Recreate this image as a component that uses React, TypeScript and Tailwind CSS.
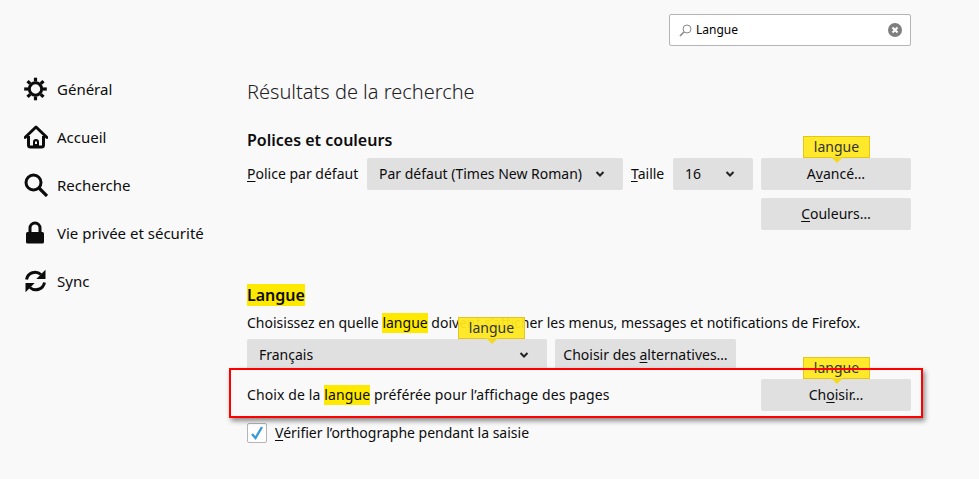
import React from "react";

const Mark = ({ children }: { children: React.ReactNode }) => (
  <span className="inline-block h-5 bg-[#ffe900]">{children}</span>
);

const Tip = ({ className }: { className: string }) => (
  <span className={`absolute bottom-[32px] h-[22px] w-[67px] border border-[#e3c51c] bg-[#ffe81f]/95 text-center text-[14px] leading-[20px] text-[#333] ${className}`}>
    langue
    <span className="absolute left-1/2 top-full h-0 w-0 -translate-x-1/2 border-x-[6px] border-t-[6px] border-x-transparent border-t-[#f2d91e]" />
  </span>
);

const U = ({ children }: { children: React.ReactNode }) => (
  <span className="underline underline-offset-2">{children}</span>
);

const Chevron = () => (
  <svg width="12" height="12" viewBox="0 0 12 12" fill="none" stroke="#222" strokeWidth="2">
    <path d="M2.500 4l3.500 3.500L9.500 4" />
  </svg>
);

const Btn = ({ className, children }: { className: string; children: React.ReactNode }) => (
  <div className={`relative flex h-8 items-center justify-center rounded-[2px] bg-[#e0e0e1] ${className}`}>{children}</div>
);

const Select = ({ className, label, children }: { className: string; label: string; children?: React.ReactNode }) => (
  <div className={`relative flex h-8 items-center justify-between rounded-[2px] bg-[#e0e0e1] pl-3 pr-[17px] ${className}`}>
    {children}
    <span>{label}</span>
    <Chevron />
  </div>
);

const gearTeeth = [0, 45, 90, 135, 180, 225, 270, 315];

const items: [string, React.ReactNode][] = [
  [
    "Général",
    <svg key="g" width="24" height="24" viewBox="0 0 24 24" fill="none" stroke="#0c0c0d">
      <circle cx="11.500" cy="12" r="6.200" strokeWidth="3" />
      {gearTeeth.map((a) => (
        <path key={a} d="M11.500 4.500V.7" strokeWidth="3.200" transform={`rotate(${a} 11.500 12)`} />
      ))}
    </svg>,
  ],
  [
    "Accueil",
    <svg key="a" width="24" height="24" viewBox="0 0 24 24" fill="none" stroke="#0c0c0d">
      <path d="M1 12.500L12 2l11 10.500" strokeWidth="3" strokeLinecap="round" strokeLinejoin="round" />
      <path d="M4.500 11v9a2 2 0 002 2h11a2 2 0 002-2v-9" strokeWidth="3" />
      <path fillRule="evenodd" fill="#0c0c0d" stroke="none" d="M9 22v-5a3 3 0 016 0v5zm2-5.500v2.500h2v-2.500z" />
    </svg>,
  ],
  [
    "Recherche",
    <svg key="r" width="24" height="24" viewBox="0 0 24 24" fill="none" stroke="#0c0c0d">
      <circle cx="9.500" cy="9.500" r="7.500" strokeWidth="3" />
      <path d="M15 15l8 8" strokeWidth="3.200" />
    </svg>,
  ],
  [
    "Vie privée et sécurité",
    <svg key="v" width="24" height="24" viewBox="0 0 24 24" fill="none">
      <path d="M6 12V7a5 5 0 0110 0v5" stroke="#0c0c0d" strokeWidth="3" />
      <rect x="2" y="11" width="18" height="11.500" rx="1.500" fill="#0c0c0d" />
    </svg>,
  ],
  [
    "Sync",
    <svg key="s" width="24" height="24" viewBox="0 0 24 24" fill="#0c0c0d">
      <path d="M2.500 10.500A8.800 8.800 0 0117 5.500" fill="none" stroke="#0c0c0d" strokeWidth="3" />
      <path d="M21.500 .8v9.200h-9.200z" />
      <path d="M20.500 13.500A8.800 8.800 0 016 18.500" fill="none" stroke="#0c0c0d" strokeWidth="3" />
      <path d="M1.500 23.200V14h9.200z" />
    </svg>,
  ],
];

export default function App() {
  return (
    <div className="flex h-[479px] w-[979px] overflow-hidden bg-[#f9f9fa] text-[14px] leading-5 text-[#0c0c0d]" style={{ fontFamily: '"Noto Sans", sans-serif' }}>
      <nav className="flex w-[247px] shrink-0 flex-col gap-6 pl-6 pt-[77px] text-[15px]">
        {items.map(([label, icon]) => (
          <div key={label} className="flex h-6 items-center gap-[9px]">
            {icon}
            <span>{label}</span>
          </div>
        ))}
      </nav>
      <main className="w-[664px] pt-[14px]">
        <div className="ml-auto flex h-8 w-[242px] items-center rounded-[2px] border border-[#b5b5b6] bg-white pl-[9px] pr-[8px]">
          <svg width="13" height="13" viewBox="0 0 13 13" fill="none" stroke="#8a8a8a" strokeWidth="1">
            <circle cx="8" cy="5" r="4" />
            <path d="M5 8l-4 4" strokeWidth="1.600" />
          </svg>
          <span className="ml-1 flex-1 text-[12px] text-black">Langue</span>
          <svg width="14" height="14" viewBox="0 0 14 14">
            <circle cx="7" cy="7" r="7" fill="#7f7f80" />
            <path d="M4.500 4.500l5 5M9.500 4.500l-5 5" stroke="#fff" strokeWidth="2" />
          </svg>
        </div>
        <h1 className="mt-[31px] text-[20px] font-light leading-[30px] text-[#202023]">Résultats de la recherche</h1>
        <h2 className="mt-[21px] text-[16px] font-semibold leading-[24px]">Polices et couleurs</h2>
        <div className="mt-[6px] flex items-center">
          <span className="w-[120px]"><U>P</U>olice par défaut</span>
          <Select className="w-[256px]" label="Par défaut (Times New Roman)" />
          <span className="ml-2 w-[42px]"><U>T</U>aille</span>
          <Select className="w-[80px]" label="16" />
          <Btn className="ml-2 w-[150px]">
            <Tip className="left-[42px]" />
            <span>A<U>v</U>ancé…</span>
          </Btn>
        </div>
        <Btn className="ml-[514px] mt-2 w-[150px]"><span><U>C</U>ouleurs…</span></Btn>
        <h2 className="mt-[54px] w-fit bg-[#ffe900] text-[16px] font-semibold leading-[22px]">Langue</h2>
        <p className="mt-[7px] leading-[20px]">Choisissez en quelle <Mark>langue</Mark> doivent s’afficher les menus, messages et notifications de Firefox.</p>
        <div className="mt-[6px] flex gap-2">
          <Select className="w-[300px]" label="Français">
            <Tip className="left-[211px]" />
          </Select>
          <Btn className="w-[181px]"><span>Choisir des <U>a</U>lternatives…</span></Btn>
        </div>
        <div className="relative z-10 -mt-[3px] flex h-[50px] items-center justify-between pt-[4px]">
          <div className="absolute -left-[18px] -right-[12px] inset-y-0 bg-[#f9f9fa] shadow-[2px_3px_5px_rgba(0,0,0,0.45)]" />
          <span className="relative tracking-[0.12px]">Choix de la <Mark>langue</Mark> préférée pour l’affichage des pages</span>
          <Btn className="w-[150px]">
            <Tip className="left-[42px]" />
            <span className="relative">Ch<U>o</U>isir…</span>
          </Btn>
          <div className="absolute -left-[18px] -right-[12px] inset-y-0 border-2 border-[#f00]" />
        </div>
        <div className="mt-[5px] flex items-center gap-2">
          <span className="flex h-5 w-5 items-center justify-center rounded-[2px] border border-[#b5b5b6] bg-white">
            <svg width="16" height="16" viewBox="0 0 16 16" fill="none" stroke="#3a9bd8" strokeWidth="2.400">
              <path d="M3 9l3.500 4L13 2" />
            </svg>
          </span>
          <span><U>V</U>érifier l’orthographe pendant la saisie</span>
        </div>
      </main>
    </div>
  );
}
